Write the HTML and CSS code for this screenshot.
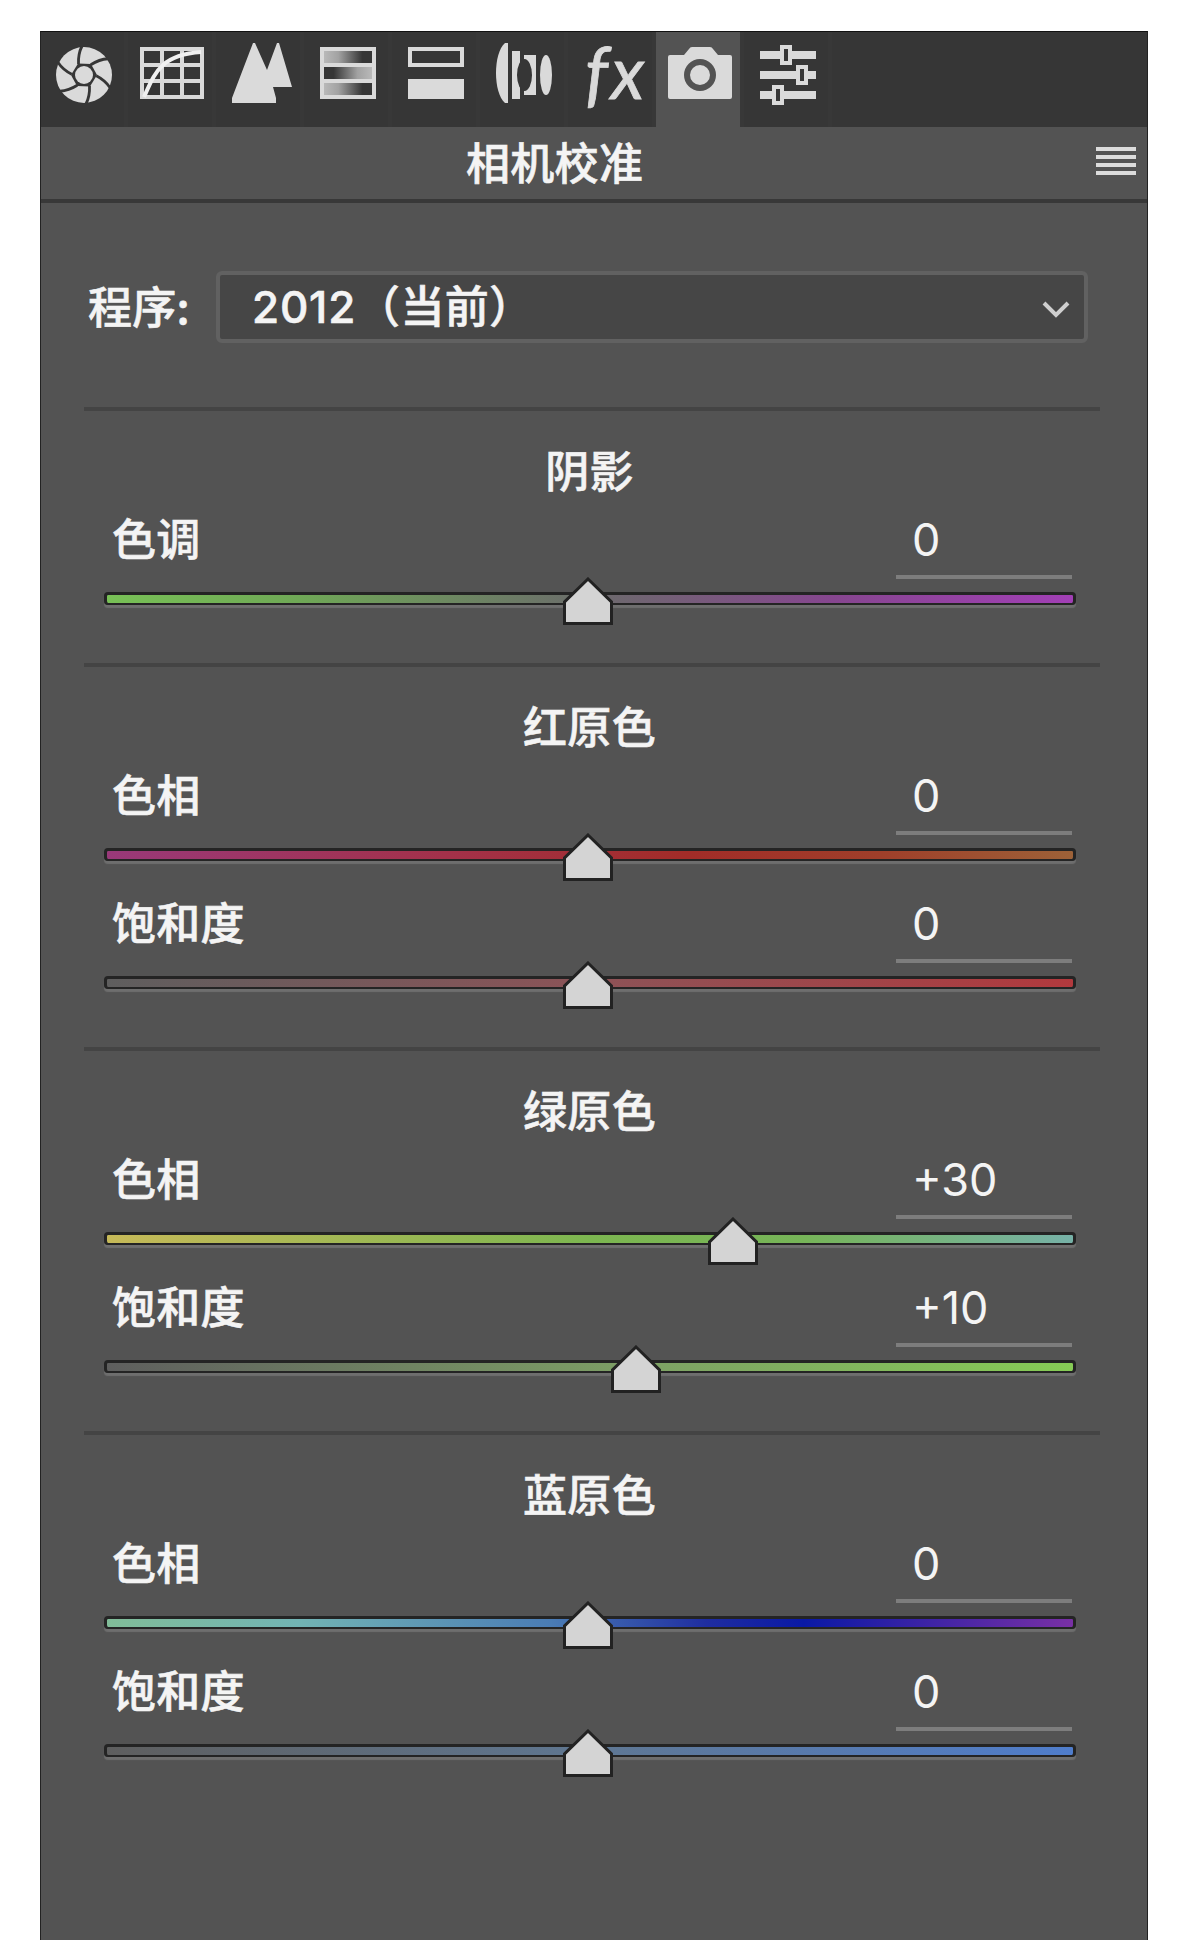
FILE: index.html
```
<!DOCTYPE html>
<html lang="zh-CN">
<head>
    <meta charset="utf-8" />
    <meta name="viewport" content="width=device-width, initial-scale=1.0" />
    <title>相机校准</title>
    <link rel="stylesheet" href="styles.css">
</head>
<body>
    <div class="panel">
        <nav class="tabs">
            <div class="tab">
                <svg viewBox="0 0 88 96">
                    <g transform="translate(44 44)">
                        <circle r="28" class="light" />
                        <g class="blades">
                            <path id="blade" d="M-2 -29Q-6 -21 -5.5 -11" />
                            <use href="#blade" transform="rotate(60)" />
                            <use href="#blade" transform="rotate(120)" />
                            <use href="#blade" transform="rotate(180)" />
                            <use href="#blade" transform="rotate(240)" />
                            <use href="#blade" transform="rotate(300)" />
                        </g>
                        <path d="M-6 -11.5L7 -11L13 0L6 11.5L-7 11L-13 0Z" class="dark" />
                        <circle r="9" class="light" />
                    </g>
                </svg>
            </div>
            <div class="tab">
                <svg viewBox="0 0 88 96">
                    <path d="M12 18H76M12 66H76M14 18V66M74 18V66M34 18V66M54 18V66M14 34H74M14 50H74" class="line" />
                    <path d="M16 66C27 42 32 24 73 21" class="curve" />
                </svg>
            </div>
            <div class="tab">
                <svg viewBox="0 0 88 96">
                    <path d="M37 12H39L51 39L61 12H63L76 56H57L60 67V72H16V67Z" class="light" />
                </svg>
            </div>
            <div class="tab">
                <svg viewBox="0 0 88 96">
                    <defs>
                        <linearGradient id="fade">
                            <stop offset="0" stop-color="#b9b9b9" />
                            <stop offset="0.3" stop-color="#a2a2a2" />
                            <stop offset="0.8" stop-color="#363636" />
                        </linearGradient>
                        <linearGradient id="fadeback">
                            <stop offset="0.2" stop-color="#363636" />
                            <stop offset="0.7" stop-color="#a2a2a2" />
                            <stop offset="1" stop-color="#b9b9b9" />
                        </linearGradient>
                    </defs>
                    <rect x="16" y="16" width="56" height="52" class="light" />
                    <rect x="20" y="20" width="48" height="12" fill="url(#fade)" />
                    <rect x="20" y="36" width="48" height="12" fill="url(#fadeback)" />
                    <rect x="20" y="52" width="48" height="12" fill="url(#fade)" />
                </svg>
            </div>
            <div class="tab">
                <svg viewBox="0 0 88 96">
                    <rect x="18" y="18" width="52" height="16" class="line" />
                    <rect x="16" y="48" width="56" height="20" class="light" />
                </svg>
            </div>
            <div class="tab">
                <svg viewBox="0 0 88 96">
                    <path d="M28 12H25C13 22 13 62 25 72H28Z" class="light" />
                    <path d="M32 20H40V68H32ZM44 24H56V64H44Z" class="light" />
                    <ellipse cx="44.5" cy="44" rx="7.5" ry="16" class="dark" />
                    <ellipse cx="66" cy="44" rx="6" ry="20" class="light" />
                </svg>
            </div>
            <div class="tab fx">fx</div>
            <div class="tab active">
                <svg viewBox="0 0 88 96">
                    <path d="M14 24H28L33 18Q34 16 36 16H54Q56 16 57 18L62 24H74Q76 24 76 26V66Q76 68 74 68H14Q12 68 12 66V26Q12 24 14 24Z" class="light" />
                    <circle cx="44" cy="44" r="13" class="ring" />
                </svg>
            </div>
            <div class="tab">
                <svg viewBox="0 0 88 96">
                    <path d="M16 20H72V28H16ZM16 40H72V48H16ZM16 60H72V68H16Z" class="light" />
                    <path d="M36 14H48V34H36ZM52 34H64V54H52ZM28 54H40V74H28Z" class="light" />
                    <path d="M40 18H44V30H40ZM56 38H60V50H56ZM32 58H36V70H32Z" class="dark" />
                </svg>
            </div>
        </nav>

        <header>
            <h1>相机校准</h1>
            <div class="menu"><i></i><i></i><i></i><i></i></div>
        </header>

        <div class="process">
            <span class="process-label">程序:</span>
            <div class="select">
                <span><span class="num">2012</span>（当前）</span>
                <svg width="28" height="18" viewBox="0 0 28 18"><path d="M2 2L14 14L26 2" /></svg>
            </div>
        </div>

        <section>
            <h2>阴影</h2>
            <div class="row">
                <div class="info"><label>色调</label><span class="value">0</span></div>
                <div class="track shadow-tint"><svg class="thumb" style="left: 50%" viewBox="0 0 50 48"><path d="M25 2L48.500 25V46.500H1.500V25Z" /></svg></div>
            </div>
        </section>

        <section>
            <h2>红原色</h2>
            <div class="row">
                <div class="info"><label>色相</label><span class="value">0</span></div>
                <div class="track red-hue"><svg class="thumb" style="left: 50%" viewBox="0 0 50 48"><path d="M25 2L48.500 25V46.500H1.500V25Z" /></svg></div>
            </div>
            <div class="row">
                <div class="info"><label>饱和度</label><span class="value">0</span></div>
                <div class="track red-sat"><svg class="thumb" style="left: 50%" viewBox="0 0 50 48"><path d="M25 2L48.500 25V46.500H1.500V25Z" /></svg></div>
            </div>
        </section>

        <section>
            <h2>绿原色</h2>
            <div class="row">
                <div class="info"><label>色相</label><span class="value">+30</span></div>
                <div class="track green-hue"><svg class="thumb" style="left: 65%" viewBox="0 0 50 48"><path d="M25 2L48.500 25V46.500H1.500V25Z" /></svg></div>
            </div>
            <div class="row">
                <div class="info"><label>饱和度</label><span class="value">+10</span></div>
                <div class="track green-sat"><svg class="thumb" style="left: 55%" viewBox="0 0 50 48"><path d="M25 2L48.500 25V46.500H1.500V25Z" /></svg></div>
            </div>
        </section>

        <section>
            <h2>蓝原色</h2>
            <div class="row">
                <div class="info"><label>色相</label><span class="value">0</span></div>
                <div class="track blue-hue"><svg class="thumb" style="left: 50%" viewBox="0 0 50 48"><path d="M25 2L48.500 25V46.500H1.500V25Z" /></svg></div>
            </div>
            <div class="row">
                <div class="info"><label>饱和度</label><span class="value">0</span></div>
                <div class="track blue-sat"><svg class="thumb" style="left: 50%" viewBox="0 0 50 48"><path d="M25 2L48.500 25V46.500H1.500V25Z" /></svg></div>
            </div>
        </section>
    </div>
</body>
</html>
```
FILE: styles.css
```
* {
    box-sizing: border-box;
}

body {
    margin: 0;
    padding: 31px 44px 0 40px;
    height: 1940px;
    overflow: hidden;
    background-color: white;
    font-family: "Noto Sans CJK SC", sans-serif;
    font-size: 44px;
    font-weight: 500;
    letter-spacing: 0.3px;
    -webkit-text-stroke: 0.6px #f4f4f4;
    color: #f4f4f4;
}

.panel {
    position: relative;
    height: 1920px;
    background-color: #535353;
}

/* thin frame over the toolbar and panel edges */
.panel::after {
    content: "";
    position: absolute;
    inset: 0;
    border: 1px solid #222;
    border-top-color: #111;
    pointer-events: none;
}

.tabs {
    display: flex;
    height: 96px;
    background-color: #363636;
}

.tab {
    width: 88px;
    height: 96px;
    border-right: 4px solid #383838;
}

.tab svg {
    display: block;
    width: 88px;
    height: 96px;
}

.tab.active {
    background-color: #535353;
    background-clip: padding-box;
}

.light {
    fill: #dadada;
}

.dark {
    fill: #363636;
}

.line {
    fill: none;
    stroke: #dadada;
    stroke-width: 4;
}

.curve {
    fill: none;
    stroke: #f0f0f0;
    stroke-width: 4;
}

.blades {
    fill: none;
    stroke: #363636;
    stroke-width: 2.8;
}

.ring {
    fill: none;
    stroke: #535353;
    stroke-width: 6;
}

.fx {
    font-family: Lato, sans-serif;
    font-style: italic;
    font-weight: 400;
    font-size: 72px;
    line-height: 80px;
    letter-spacing: 3px;
    padding-left: 17px;
    color: #dadada;
    -webkit-text-stroke: 0.8px #dadada;
}

header {
    display: flex;
    justify-content: space-between;
    align-items: flex-start;
    height: 76px;
    padding: 0 12px 0 426px;
    border-bottom: 4px solid #383838;
}

h1, h2 {
    margin: 0;
    font-size: 44px;
    font-weight: 500;
}

h1 {
    line-height: 68px;
}

.menu {
    display: flex;
    flex-direction: column;
    gap: 4px;
    padding-top: 20px;
}

.menu i {
    width: 40px;
    height: 4px;
    background-color: #dcdcdc;
}

.process {
    display: flex;
    align-items: center;
    height: 72px;
    margin: 68px 60px 64px 48px;
}

.process-label {
    width: 128px;
    padding-bottom: 4px;
}

.select {
    flex: 1;
    display: flex;
    justify-content: space-between;
    align-items: center;
    height: 72px;
    padding: 0 14px 0 32px;
    line-height: 60px;
    background-color: #464646;
    border: 4px solid #616161;
    border-radius: 6px;
}

.select > span {
    padding-bottom: 4px;
}

.select svg {
    margin-top: 5px;
}

.select svg path {
    fill: none;
    stroke: #cfcfcf;
    stroke-width: 4;
}

.num, .value {
    font-family: Inter, "Noto Sans CJK SC", sans-serif;
}

.num {
    letter-spacing: 0.8px;
}

section {
    margin: 0 48px 0 44px;
    padding-bottom: 28px;
    border-top: 4px solid #444;
}

h2 {
    padding: 22px 0 2px 10px;
    line-height: 72px;
    width: 1001px;
    text-align: center;
}

.row {
    height: 128px;
    padding: 0 24px 0 20px;
}

.info {
    display: flex;
    justify-content: space-between;
    height: 72px;
    padding: 0 4px 0 8px;
    line-height: 60px;
}

.value {
    width: 176px;
    padding-left: 16px;
    border-bottom: 4px solid #7d7d7d;
    font-size: 45px;
    font-weight: 400;
    letter-spacing: 0;
    line-height: 66px;
    -webkit-text-stroke: 0;
}

.track {
    position: relative;
    height: 13px;
    margin-top: 13px;
    border: 3px solid #242424;
    border-bottom-width: 2px;
    border-radius: 4px;
    background-origin: border-box;
    background-clip: padding-box;
    box-shadow: 0 3px 1px #6e6e6e;
}

.thumb {
    position: absolute;
    top: -18px;
    width: 50px;
    height: 48px;
    margin-left: -27px;
}

.thumb path {
    fill: #d4d4d4;
    stroke: #222;
    stroke-width: 3;
}

.shadow-tint {
    background-image: linear-gradient(to right, #78c156, #6fa856 20%, #6b6b6b 50%, #86468f 75%, #a23fb6);
}

.red-hue {
    background-image: linear-gradient(to right, #99397a, #a3314a 35%, #a22c28 60%, #9f3f2a 80%, #9d6238);
}

.red-sat {
    background-image: linear-gradient(to right, #5e5e5e, #8c5357 50%, #b2393d);
}

.green-hue {
    background-image: linear-gradient(to right, #c6b958, #7cb650 50%, #76b458 72%, #76b1a8);
}

.green-sat {
    background-image: linear-gradient(to right, #5e5e5e, #7da065 55%, #86cc55);
}

.blue-hue {
    background-image: linear-gradient(to right, #81bd98, #72b4b4 20%, #4a7cb5 46%, #1f2da0 62%, #0a19a5 72%, #7a30a5);
}

.blue-sat {
    background-image: linear-gradient(to right, #5e5e5e, #5f7792 50%, #4f7dcc);
}
```
